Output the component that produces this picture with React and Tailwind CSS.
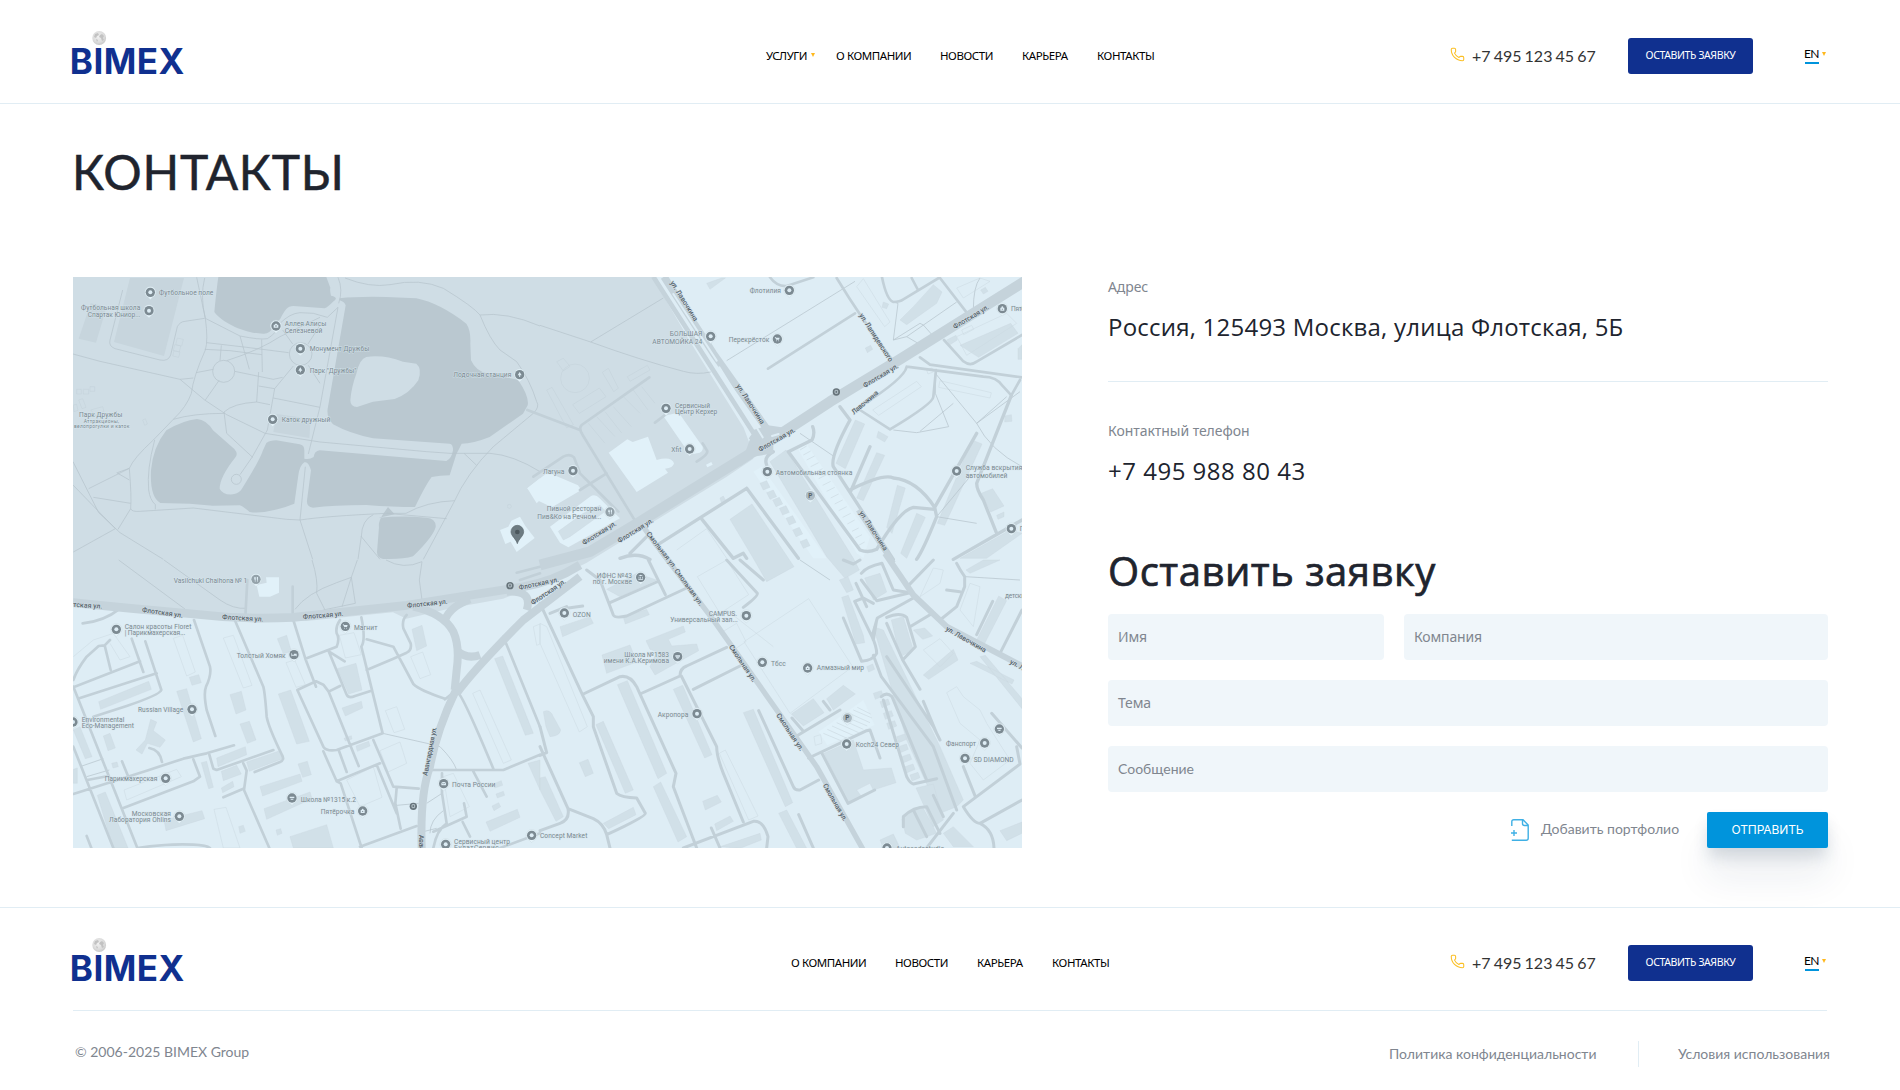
import React from "react";
import { Phone } from "lucide-react";

/* ---------- Map data. Each sheet (a, b, c, d) is one quarter of the map. ---------- */

const SHEET = {
  a: "translate(-39 -21)",
  b: "translate(1401 -21)",
  c: "translate(-39 849)",
  d: "translate(1401 849)",
};

const park =
  "M0 0H1738L1852 195L2012 452L2030 500L2041 545L1960 600L1540 858L1400 925L1290 965L1140 992L1000 1025L960 1006L700 1032L400 1018L180 995L0 975Z";

const water = [
  "M436 0C430 40 426 85 424 105C450 140 520 170 570 170Q590 172 600 150L622 125Q632 105 640 96Q650 84 672 88L755 94Q765 90 780 74Q800 62 774 56Q770 40 772 32L760 0Z",
  "M800 64Q850 58 940 60L1030 64Q1100 78 1180 140Q1194 160 1192 200L1194 250Q1210 285 1245 290L1335 308Q1370 360 1364 385L1350 410L1250 480Q1200 500 1166 500L1150 532L1130 595Q1100 596 1076 600Q1060 620 1026 690Q960 690 880 684Q780 684 720 692Q700 690 702 670L714 580Q706 552 694 556Q680 565 676 595L664 680Q640 690 600 700Q560 710 530 705Q510 688 500 685L420 686L350 680L262 678Q230 660 234 580Q240 510 280 460Q330 430 372 426Q400 428 420 460L484 516Q496 530 488 540Q440 600 440 635Q450 655 480 652Q500 650 510 630Q560 550 570 520L580 498Q590 490 610 490L680 502Q694 504 694 520L694 545Q710 548 722 540Q724 522 740 520L1120 552Q1136 545 1140 520Q1140 500 1130 500L900 484Q830 470 780 442Q760 420 764 395L818 85Q815 75 800 70Z",
  "M918 722Q990 715 1060 722Q1090 725 1088 750Q1080 780 1020 838Q990 848 930 846Q912 842 912 825L918 750Q915 735 930 712L945 690L965 712Z",
];
const island = "M880 240Q930 232 990 254L1030 260Q1048 275 1036 310Q1010 350 965 366L900 374L852 390Q832 390 832 370Q835 330 850 290Q860 245 880 240Z";

const parkBlocks = [
  ["a", "M210 24L372 24L312 258L162 216Z"],
  ["a", "M92 100L140 110L108 218L56 206Z"],
  ["a", "M650 432L752 446L748 504L640 486Z"],
];

const parkOutlines = [
  ["a", "M352 204l18 4-5 20-18-4zM344 224l18 4-4 18-18-4zM342 242l18 4-4 16-18-4zM56 390l12-4 10 26-12 4zM50 358h14v14h-14zM70 358h16v14h-16zM90 350h14v14h-14zM92 420l36-10 4 14-24 14zM40 405l10-2 4 18-12 4zM248 450l8-4 6 16-8 4z"],
  ["a", "M1342 709a6 6 0 1 0 12 0a6 6 0 1 0-12 0"],
  ["b", "M62 325a43 43 0 1 0 86 0a43 43 0 1 0-86 0M50 275l20-10 20 24-20 14zM98 404l80-50 20 26-80 50zM20 360l16-8 64 112-20 10zM205 295l30 60-14 10-34-58zM262 320l60-34 8 14-60 34zM145 460l50 60M170 440l55 60M195 425l50 64M220 410l54 60M250 380l50 50M280 360l44 60M305 350l40 50"],
];

const blocksPale = [
  ["a", "M1320 780L1345 770L1354 752L1380 740L1396 768L1424 804L1370 846L1352 815L1336 822Z"],
  ["a", "M1402 655L1440 625V690L1430 700Z"],
  ["b", "M206 548L262 508L278 516L324 500L350 570Q395 558 402 580Q400 594 375 596L384 608L290 666Z"],
  ["b", "M370 438L408 430Q422 432 430 448L488 530Q492 548 470 550Q448 556 440 540Z"],
  ["b", "M-38 655L20 610Q30 604 40 614L114 646L124 660L36 712L-10 690Z"],
  ["b", "M30 770L150 680Q165 670 178 684L240 745L85 832L60 818Z"],
  ["b", "M498 584l16-8 4 8-16 8z"],
  ["c", "M590 75L620 68L618 52H657V98L630 110H598Z"],
  ["d", "M836 515L970 420L1004 495L862 556Z"],
  ["b", "M770 530L795 515L990 800L970 865L950 850Z"],
  ["b", "M640 605L665 590L860 865H820Z"],
];

const blocks = [
  ["b", "M55 784L130 730L180 706L196 724L90 800L70 810Z"],
  ["b", "M570 748L636 702L715 820L762 890L680 935L640 865Z"],
  ["b", "M500 40L545 24H556L510 58ZM1080 150L1120 110L1180 44L1206 66L1190 100L1100 164ZM1260 226L1412 160L1434 190L1316 262Z"],
  ["b", "M888 580L946 450L974 462L916 596ZM950 684L1010 548L1034 556L970 692ZM1040 772L1072 646L1096 654L1056 790ZM1082 850L1130 730L1156 742L1100 865ZM1192 760L1296 510L1326 522L1214 766Z"],
  ["b", "M1324 670L1358 656L1392 708L1352 726ZM1015 484L1044 500L1034 516L1010 502ZM976 234l16-8 6 12-16 10zM1030 96l16 6-6 14-14-4zM1322 60l14-8 8 12-14 8zM1434 236l12-12v44h-12zM1220 210l28-14 4 14-22 14zM540 684l10-6 6 12-12 8zM1394 438l20-4 2 20-22 2zM1370 736l22-10v14l-18 8z"],
  ["b", "M690 575L738 540L940 865L958 900L915 925L860 860Z"],
  ["b", "M660 640l20-8 10 20-20 8zM680 668l20-8 10 20-20 8zM698 690l20-8 10 20-20 8zM718 715l20-8 10 20-20 8zM738 745l20-8 10 20-20 8zM758 780l20-8 10 20-20 8zM780 815l20-8 10 20-20 8zM1260 865L1410 780L1446 790L1340 865Z"],
  ["c", "M116 425L266 364L274 388L122 448ZM350 394L380 386L424 536L400 546ZM388 352l28-8 8 24-28 8zM510 404l34-10 14 56-30 12zM540 492l28-8 20 56-26 10zM256 540L272 478L290 486L280 512L316 540L300 562L262 550L246 582L228 570Z"],
  ["c", "M655 402L692 390L748 544L710 552ZM652 236l28-10 14 48-24 8zM832 326L888 310L906 390L866 402ZM846 444L904 424L908 444L856 468ZM888 558l38-14 4 14-38 16zM1056 208L1086 196L1100 258L1070 272ZM852 535l22-8 2 10-20 6z"],
  ["c", "M470 594L556 560L560 584L474 620ZM560 606L660 572L668 596L568 634ZM600 680L720 642L726 664L608 708ZM612 746L750 696L756 716L620 778ZM714 612l28-8 12 40-26 8zM484 634L530 616L544 642L490 662ZM484 684l34-20 4 16-34 18zM424 608l16-4 20 78-14 4zM130 528l20-8 16 44-22 8z"],
  ["c", "M690 830L800 794L820 864H700ZM312 780L426 752L434 776L318 812ZM112 706L136 696L204 864H160ZM40 510L60 500L96 590L76 596ZM1304 296L1328 288L1420 520L1396 526ZM1278 786L1372 748L1380 772L1290 814ZM1404 610L1440 600V690ZM40 628l12-4v46H40zM155 610l16-4 4 14-16 4zM1300 672l24-10 4 14-24 8zM1308 702l22-8 4 12-22 8zM536 800l14-4 6 18-16 6zM648 810l14-4 4 14-14 6zM1296 738l20-10 6 12-20 12z"],
  ["d", "M60 200L150 170L160 190L68 230ZM250 172L320 148L328 164L256 192ZM186 285L270 255L290 306L200 340ZM318 242L430 198L436 216L385 238L395 258L470 252L476 272L345 345L330 320L350 275L330 268ZM200 88L290 40L350 60L240 110Z"],
  ["d", "M232 374L262 362L380 640L354 656ZM168 494L190 484L280 690L256 700ZM400 388L428 376L516 584L494 594ZM610 458L640 448L758 728L736 740ZM340 680L362 666L440 830L414 846ZM118 608l26-10 16 42-24 10zM488 724l44-18 12 20-48 24zM190 790L280 742L288 764L206 806ZM524 792L570 768L580 784L530 812ZM540 860L660 820L664 840L600 865ZM716 760L740 750L800 865H770Z"],
  ["d", "M10 455Q30 445 40 470L62 510Q60 528 30 530L18 500ZM0 654L16 650L70 770L48 784L0 690Z"],
  ["d", "M754 462L820 416L852 458L790 498ZM860 416L910 376L946 402L880 450ZM852 580L940 540L970 630L1054 624L1068 668L1000 690L990 670L950 690L966 712L926 730Z"],
  ["d", "M1000 200L1030 210L1200 560L1270 720L1250 740L1200 760L1100 540ZM898 60l26-10 16 40-20 8zM905 112l20-6 45 120 4 22-26 4zM974 54L1020 40L1040 96L1000 120ZM1054 180L1090 170L1120 270L1080 290ZM1150 345L1240 268L1254 300L1166 358ZM1120 210l34-6 24 24-30 10z"],
  ["d", "M1310 240L1376 108L1400 122L1330 258ZM1290 310l20-6 112 56-6 12zM1320 290l16-4 110 130v30zM1278 30L1330 0H1380L1290 40ZM1086 778Q1110 740 1150 745L1190 820L1130 840L1096 820ZM1380 812L1446 786V820L1400 842ZM1210 820l30-20 60 60h-60zM1128 684L1180 672L1210 780L1180 800Z"],
  ["d", "M1000 400l24-8 6 16-24 10zM1020 425l24-8 6 16-24 10zM1030 460l24-8 6 16-24 10zM1040 490l24-8 6 16-24 10zM1070 530l24-8 6 16-24 10zM1075 560l24-8 6 16-24 10zM1085 590l24-8 6 16-24 10zM1095 620l24-8 6 16-24 10zM1110 645l24-8 6 16-24 10zM980 320l18-8 6 16-18 8zM1020 840L1060 822L1080 864H1030Z"],
];

const outlines = [
  ["b", "M998 420L1130 334L1144 350L1016 436ZM1200 332L1354 368L1350 384L1196 352ZM1320 24l30 10-80 50-20-30zM950 50l20-24 80 130-16 14zM1250 200L1400 130L1430 160L1280 256ZM410 840L500 776L560 865M1265 180l30-14 6 12-30 16zM1160 300l16-6 4 12-16 6z"],
  ["c", "M340 235L368 226L406 336L380 348ZM490 234L520 226L576 376L550 384ZM678 308l26-8 32 74-28 8zM838 226l44-8 22 66-48 10zM1052 290l36-14 24 68-32 12zM976 452l34-12 24 68-32 10zM960 572L1020 546L1040 610L984 636ZM192 690L350 628L364 650L200 720ZM462 748L498 742L540 864H490ZM1238 400L1260 390L1354 600L1330 610ZM860 660L940 620L966 712L900 740ZM1150 650L1180 640L1228 740L1170 770ZM40 290L100 240L160 220L210 290L180 300L150 250M1420 200l20-8v60l-10 4z"],
  ["d", "M0 190L20 200L142 500L118 516L0 250ZM538 580L556 570L654 768L626 780ZM472 50L560 0L626 104L540 160ZM612 245L806 116L938 320L750 460ZM540 220l50-30 28 55-30 20zM1220 398L1250 380L1270 410L1320 450L1340 490L1410 600L1330 660L1290 610L1320 540L1260 490ZM1150 270L1200 236L1240 280L1200 320ZM1140 110L1200 70L1210 30L1180 24ZM1260 150L1290 70L1320 80L1300 200ZM822 530l20-6 4 26-20 6zM530 165l30-15 140 110"],
];

const hatch = "M850 520l60 25M862 508l66 30M876 498l68 30M890 488l66 30M904 478l66 30M916 470l66 28M928 460l62 28M940 450l56 24M952 442l40 20";
const hatchB = "M780 540l20-12M790 555l22-12M800 570l24-12M812 590l24-12M824 608l24-12M836 626l24-12M848 646l24-12M860 664l24-12M872 684l24-12M884 702l24-12M896 722l24-12M908 742l24-12M922 762l22-12M936 784l20-10M946 804l20-10M956 826l18-10";

const paths = [
  ["a", "M39 252L120 274L360 328L400 324M434 24Q420 80 436 145Q445 210 436 240Q400 320 394 370Q380 410 340 448L280 510Q220 565 208 595L86 656M360 328L434 390L500 434L615 490L780 516L1100 545L1170 550H1290Q1360 555 1440 605M436 145L540 198Q600 210 622 206Q650 190 660 160Q690 130 720 128L760 130L802 142L834 112L780 410L745 552M410 22L436 145"],
  ["a", "M440 218L560 232L686 248M434 238L510 242L606 254M540 198L568 298M605 208L607 306M484 226L480 272M500 272Q600 240 660 200L780 142M524 304L640 328L668 322M408 308L460 298M436 390L478 330M596 306L590 396L630 404M596 348L644 356M640 384L780 412M700 288L644 356L622 480L576 562L540 614M590 396Q520 400 492 426L500 490L578 562M745 286L780 340M668 180L698 222M744 222L780 166"],
  ["a", "M458 304a33 33 0 1 0 66 0a33 33 0 1 0-66 0M688 252a34 34 0 1 0 68 0a34 34 0 1 0-68 0M514 628a15 15 0 1 0 30 0a15 15 0 1 0-30 0"],
  ["a", "M834 22Q850 60 836 100M855 24Q930 54 990 44Q1080 24 1150 55Q1240 110 1260 135Q1290 210 1320 240L1370 275Q1410 330 1430 395Q1440 410 1420 430L1300 530Q1220 610 1180 700L1090 868M1260 135Q1340 125 1440 168M340 448Q400 430 494 430M284 510Q260 600 266 660Q270 690 286 704V718M208 595Q215 680 212 716Q215 726 240 724L400 714L680 748L720 750Q800 738 980 730L1160 746M980 730H1038Q1100 695 1184 692M736 590L720 750L758 868M1212 550L1250 586M39 575L116 728L180 788L310 868M39 645L166 776L40 846M170 608L208 630M172 608L208 595M100 682L212 700M212 716L174 778M940 734Q905 750 904 800L960 868M904 798L894 868"],
  ["a", "M188 60L150 210Q145 228 165 236L300 270Q325 275 332 255L352 170Q360 155 375 154L434 145"],
  ["b", "M0 166L152 216Q300 270 430 304Q470 315 512 306M152 216L370 84M560 272L790 130L945 34"],
  ["b", "M1186 310L1186 370L1226 470L1130 488L1060 480M1186 310L1310 460L1440 365M1400 380L1310 460Q1350 540 1446 590M1140 484L1240 400M780 490L880 558M1060 96L1074 100L1060 210L1100 200L1160 235M1100 200L1250 96M1060 210L1140 160L1150 165L1190 210M1300 120Q1300 50 1320 24M1190 740L1310 760M1190 740L1290 620"],
  ["c", "M176 0L376 148V154M312 0L480 120Q520 148 560 145M756 0Q775 60 770 100L796 152M705 148Q740 100 830 68L874 52L886 130L790 150M874 52L846 140M892 0L874 52M978 0Q1030 30 1086 5L1078 60L1086 120M968 520L1110 552L1140 560Q1180 600 1190 630M1010 736L1076 730M1100 730L1146 700M1110 820Q1110 780 1150 752M1090 815L1130 805M60 620L130 596M80 650L148 630"],
  ["d", "M780 0L870 60M1440 60L1276 50"],
];

const roads = [
  ["b", 8, "M328 322L125 465Q115 475 128 495L290 760M120 480L-38 420M-20 620L70 560Q90 550 102 562L120 610L235 725M120 660L200 610M345 458L375 435M470 575Q510 550 500 540L488 520"],
  ["b", 8, "M684 296L945 130M890 24Q960 140 1064 280M1100 290L1330 320Q1370 320 1390 350L1414 376L1440 330M1100 290Q1095 325 960 410M1188 300L1180 380Q1180 400 1050 478L960 420M1140 262L1170 284L1446 322M1212 210L1270 274Q1290 290 1310 275L1446 195M1026 22Q1040 90 1060 96Q1080 95 1090 88L1196 24M1115 24L1134 60M1200 24L1282 130M690 22Q710 50 740 48L820 22"],
  ["b", 10, "M900 410L930 450Q870 560 880 590L1060 868M745 545L816 510Q826 490 818 470M745 545L960 840Q985 850 1010 838M990 530L932 664M1414 376L1310 640Q1310 660 1330 690L1370 790M930 660Q1030 610 1060 624Q1130 630 1184 712L1310 490M1184 712L1190 740Q1150 840 1130 868M1010 838Q1080 720 1120 712L1184 718M1446 750L1240 868M680 585Q670 560 700 545"],
  ["b", 10, "M620 655L350 826M620 655L775 865M486 748L580 865L610 850L620 865M240 865Q290 845 330 868M320 800L270 850"],
  ["c", 8, "M180 146Q130 185 68 190M40 360Q50 330 80 290L116 258L134 256L150 240M134 256L152 330M40 382L240 304M60 414L290 340M215 236L250 336M256 244L304 390Q300 404 200 438L100 470M40 380L232 864M40 560L160 864M82 660L145 648M40 702L260 632L370 596Q395 590 440 580L522 556M400 598L420 650L400 664L190 744M268 564Q300 570 306 606M186 604L204 648M80 828L94 864M232 864Q330 850 400 854Q440 856 450 864"],
  ["c", 8, "M402 180L450 320Q455 345 438 380Q430 400 440 450L466 528M526 184L610 380Q615 400 620 470Q625 500 666 585Q675 600 660 606L584 636M448 584L460 626L470 630L640 570M490 712L550 686M550 610L560 632L552 690L628 864M700 180L736 296L768 380M736 296L830 260Q840 235 830 220Q826 200 840 180M806 274L854 304M768 364L712 390L790 560Q800 575 830 570L968 520L904 260Q918 240 904 172M768 364L790 374L806 395L840 378M806 395L896 618M806 274L860 404Q866 416 885 408L934 392M920 238L1000 260L1060 372Q1080 392 1155 416M920 330L1000 296L1040 278Q1056 270 1052 250L1030 205Q1025 180 1040 165"],
  ["c", 8, "M556 170L562 60M698 160V80M790 574L830 664Q840 660 960 610M836 570L860 636M830 664L842 670L905 864M940 540L1000 680L1076 686M1010 684L1006 730L1022 806M900 860L1070 798M950 614L1010 760M1116 630H1330L1440 584M1195 400Q1210 410 1300 626M1330 230L1440 500M1146 640V700L1160 790M1160 790Q1130 810 1120 864M1120 815L1220 770L1212 730M1240 634L1280 710M1208 786L1230 830M1320 864L1440 820M1190 390L1155 418M1440 20L1370 38M1380 60L1440 40"],
  ["d", 9, "M0 130L130 410L160 470V500L230 700Q245 712 290 714L316 760Q318 770 200 824M130 402L240 350Q270 344 290 380L408 640L400 680L470 864M300 402L420 348Q420 325 440 318L560 262M424 348L530 560Q530 590 550 640L610 786M460 388L600 318M200 824Q190 790 160 776L84 746M84 746L0 560M84 746Q90 780 60 790L0 812M200 824L210 864M0 586L20 578L0 500M30 160L80 140M80 145L128 138M140 30L180 60L220 165Q225 176 260 168L440 84M210 128L350 66M325 0L376 104"],
  ["d", 9, "M430 864L640 784Q670 780 684 830L680 864M514 804L540 864M560 0L652 100Q655 108 610 142M600 0L670 60M656 452L760 680Q765 692 780 690L836 660M776 764L820 864M770 528L900 450M850 424L870 450M756 474L790 514M806 594L980 512L990 510L1020 594M846 580L924 730L1004 690M1270 620L1306 710M1355 460L1446 564M1270 740L1440 612L1430 560M1270 740Q1300 790 1320 790L1446 720M1320 790Q1360 810 1362 864M1240 760L1160 864"],
  ["d", 9, "M1120 114L1012 174L996 230Q1010 260 1010 280Q1000 300 965 304L910 174M996 230L944 124L970 114L1000 130M948 70L980 140M1010 180L1000 240M964 40Q980 20 1026 10L1060 90L1110 98L1010 122L964 60M1180 0L1108 74M1040 172Q1080 155 1100 172L1126 260L1088 300L1040 190M1110 200L1170 164M1088 300L1140 388M1000 286L1024 350L1180 560L1250 750M1040 290L1180 500L1200 540M1150 424L1190 520M1024 410Q1040 395 1056 410L1160 660M1030 420L1100 650Q1110 670 1120 672L1190 656M1090 800L1090 770Q1120 740 1160 740L1200 820M1120 750L1160 830M1180 706L1210 770M1380 280L1446 150M1310 224L1358 124M1250 10Q1260 30 1274 50V80L1250 140L1200 180M1220 90L1260 95M910 0L940 12L960 0"],
];

const mainRoads = [
  ["b", 32, "M1470 24L1080 268L870 395L640 545L300 755L150 845L0 885"],
  ["b", 14, "M340 20L660 520L630 500"],
  ["b", 22, "M372 20L520 250L690 490"],
  ["b", 16, "M310 770L345 820L400 890M955 720L1060 880"],
  ["c", 26, "M39 128Q200 145 400 162Q550 180 700 172L1040 136L1390 80Q1480 65 1560 15"],
  ["c", 24, "M1060 140Q1150 160 1180 215Q1200 260 1190 330L1184 390M1190 400Q1240 330 1390 180L1560 50M1155 180Q1170 140 1230 118M1190 270Q1220 300 1260 285M1340 95Q1420 90 1400 150"],
  ["c", 24, "M1188 390Q1130 510 1110 620Q1080 700 1085 864"],
  ["d", 16, "M360 -30L520 180L830 620L970 870"],
  ["d", 18, "M1035 -20L1120 105L1220 200L1446 318"],
];

const gaps = [
  ["b", 6, "M400 72L530 272M538 292L668 502"],
  ["b", 6, "M696 498l20-6"],
];

const streets = [
  ["b", 390, 38, 58, 138, "ул. Лавочкина"], ["b", 588, 348, 57, 138, "ул. Лавочкина"],
  ["b", 957, 136, 57, 168, "ул. Лапидевского"], ["b", 1244, 178, -31, 122, "Флотская ул."],
  ["b", 974, 354, -31, 120, "Флотская ул."], ["b", 942, 434, -40, 98, "Лавочкина"],
  ["b", 660, 546, -30, 124, "Флотская ул."], ["b", 957, 728, 57, 138, "ул. Лавочкина"],
  ["b", 238, 820, -32, 122, "Флотская ул."], ["b", 132, 826, -32, 116, "Флотская ул."],
  ["b", 318, 792, 52, 134, "Смольная ул."],
  ["c", 39, 140, 4, 88, "тская ул."], ["c", 245, 156, 8, 124, "Флотская ул."],
  ["c", 486, 178, 3, 124, "Флотская ул."], ["c", 729, 178, -5, 122, "Флотская ул."],
  ["c", 1042, 144, -6, 122, "Флотская ул."], ["c", 1378, 90, -12, 122, "Флотская ул."],
  ["c", 1418, 136, -34, 122, "Флотская ул."], ["c", 1102, 648, -79, 148, "Авангардная ул."],
  ["c", 1078, 824, 90, 148, "Авангардная ул."],
  ["d", 402, 32, 54, 132, "Смольная ул."], ["d", 566, 260, 56, 130, "Смольная ул."],
  ["d", 708, 466, 56, 130, "Смольная ул."], ["d", 848, 676, 60, 126, "Смольная ул."],
  ["d", 1216, 210, 30, 136, "ул. Лавочкина"], ["d", 1408, 310, 28, 136, "ул. Лавочкина"],
];

/* sheet, x, y (baseline), anchor, width, text */
const labels = [
  ["a", 297, 74, "start", 163, "Футбольное поле"], ["a", 241, 120, "end", 178, "Футбольная школа"],
  ["a", 241, 140, "end", 158, "Спартак Юниор..."], ["a", 674, 168, "start", 125, "Аллея Алисы"],
  ["a", 674, 188, "start", 113, "Селезневой"], ["a", 749, 243, "start", 179, "Монумент Дружбы"],
  ["a", 749, 309, "start", 140, "Парк \"Дружбы\""], ["a", 1354, 321, "end", 174, "Лодочная станция"],
  ["a", 665, 456, "start", 146, "Каток дружный"], ["a", 57, 441, "start", 130, "Парк Дружбы"],
  ["b", 723, 70, "end", 94, "Флотилия"], ["b", 487, 199, "end", 98, "БОЛЬШАЯ"],
  ["b", 487, 221, "end", 150, "АВТОМОЙКА 24"], ["b", 688, 216, "end", 122, "Перекрёсток"],
  ["b", 1413, 123, "start", 92, "Пятёрочка"], ["b", 405, 413, "start", 105, "Сервисный"],
  ["b", 405, 433, "start", 127, "Центр Керхер"], ["b", 424, 545, "end", 30, "Xfit"],
  ["b", 73, 611, "end", 64, "Лагуна"], ["b", 184, 724, "end", 164, "Пивной ресторан"],
  ["b", 184, 746, "end", 192, "Пив&Ко на Речном..."], ["b", 707, 614, "start", 230, "Автомобильная стоянка"],
  ["b", 1277, 600, "start", 170, "Служба вскрытия"], ["b", 1277, 623, "start", 125, "автомобилей"],
  ["b", 1439, 783, "start", 60, "Гараж"],
  ["c", 562, 68, "end", 221, "Vasilchuki Chaihona № 1"], ["c", 194, 206, "start", 200, "Салон красоты Floret"],
  ["c", 194, 225, "start", 182, "| Парикмахерская..."], ["c", 882, 209, "start", 70, "Магнит"],
  ["c", 677, 294, "end", 147, "Толстый Хомяк"], ["c", 370, 456, "end", 136, "Russian Village"],
  ["c", 65, 486, "start", 128, "Environmental"], ["c", 65, 504, "start", 157, "Eco-Management"],
  ["c", 292, 663, "end", 158, "Парикмахерская"], ["c", 722, 725, "start", 166, "Школа №1315 к.2"],
  ["c", 883, 761, "end", 101, "Пятёрочка"], ["c", 1176, 681, "start", 130, "Почта России"],
  ["c", 333, 768, "end", 118, "Московская"], ["c", 333, 787, "end", 186, "Лаборатория Ohlins"],
  ["c", 1182, 852, "start", 168, "Сервисный центр"], ["c", 1182, 871, "start", 134, "БулатСервис"],
  ["d", 276, 53, "end", 106, "ИФНС №43"], ["d", 276, 72, "end", 118, "по г. Москве"],
  ["d", 98, 171, "start", 54, "OZON"], ["d", 591, 167, "end", 85, "CAMPUS."],
  ["d", 593, 186, "end", 202, "Универсальный зал..."], ["d", 387, 290, "end", 134, "Школа №1583"],
  ["d", 387, 308, "end", 196, "имени К.А.Керимова"], ["d", 693, 319, "start", 44, "Тбсс"],
  ["d", 830, 331, "start", 142, "Алмазный мир"], ["d", 445, 470, "end", 92, "Акропора"],
  ["d", 947, 562, "start", 130, "Koch24 Север"], ["d", 1308, 559, "end", 90, "Фанспорт"],
  ["d", 1301, 605, "start", 120, "SD DIAMOND"], ["d", 0, 833, "start", 142, "Concept Market"],
  ["d", 1395, 115, "start", 60, "детски"], ["d", 1068, 873, "start", 145, "Autocadastudio"],
];

/* sheet, x, y, glyph */
const pins = [
  ["a", 271, 67, "dot"], ["a", 267, 122, "dot"], ["a", 648, 168, "camera"], ["a", 721, 236, "dot"],
  ["a", 721, 300, "tree"], ["a", 1379, 314, "tree"], ["a", 638, 448, "dot"],
  ["b", 748, 61, "dot"], ["b", 512, 199, "dot"], ["b", 712, 207, "cart"], ["b", 1387, 116, "bag"],
  ["b", 378, 415, "dot"], ["b", 449, 537, "dot"], ["b", 99, 602, "dot"], ["b", 210, 726, "food"],
  ["b", 682, 605, "dot"], ["b", 811, 677, "P"], ["b", 1250, 603, "dot"], ["b", 1414, 776, "dot"],
  ["c", 588, 58, "food"], ["c", 169, 208, "dot"], ["c", 856, 199, "cart"], ["c", 702, 284, "bed"],
  ["c", 396, 448, "dot"], ["c", 39, 486, "dot"], ["c", 317, 655, "dot"], ["c", 696, 714, "school"],
  ["c", 908, 753, "bag"], ["c", 1151, 671, "mail"], ["c", 358, 769, "dot"], ["c", 1157, 853, "dot"],
  ["c", 1415, 826, "dot"], ["d", 302, 52, "bank"], ["d", 73, 159, "dot"], ["d", 619, 167, "dot"],
  ["d", 413, 290, "school"], ["d", 667, 307, "dot"], ["d", 803, 324, "bag"], ["d", 471, 461, "dot"],
  ["d", 922, 474, "P"], ["d", 920, 552, "dot"], ["d", 1334, 549, "dot"], ["d", 1378, 507, "school"],
  ["d", 1275, 595, "dot"], ["d", 1041, 864, "dot"],
];

const stops = [["b", 889, 366], ["c", 1350, 77], ["c", 1060, 739]];

const glyphs = {
  dot: <circle r="6" fill="#deedf5" />,
  camera: <path d="M-7-4h3l2-3h4l2 3h3v9H-7zM-2.5 0a2.500 2.500 0 1 0 5 0a2.500 2.500 0 1 0-5 0" fill="#deedf5" fillRule="evenodd" />,
  tree: <path d="M0-8L6 2H1.500V7h-3V2H-6z" fill="#deedf5" />,
  cart: <path d="M-8-6h3l1 2H7L5 2h-8zM-3 4h2v3h-2zM3 4h2v3H3z" fill="#deedf5" />,
  bag: <path d="M-6-3h3a3 4 0 0 1 6 0h3v9H-6zM-1.500 0v3h3V0z" fill="#deedf5" fillRule="evenodd" />,
  food: <path d="M-6-7h1.500v5h1v-5H-2v5h1v-5H.5v6l-2 2v6h-2v-6l-2.500-2zM3-7h3V7H4V1H3z" fill="#deedf5" />,
  bed: <path d="M-8-4h2v4H0v-3h8v8H6V3H-6v2h-2z" fill="#deedf5" />,
  school: <path d="M-7-4H7v4H-7zM-5 2H5v2L0 6-5 4z" fill="#deedf5" />,
  mail: <path d="M-7-5H7L0 0zM-7-3l7 5 7-5v8H-7z" fill="#deedf5" />,
  bank: <path d="M0-8l7 4H-7zM-6-2h2v6h-2zM-1-2h2v6h-2zM4-2h2v6H4zM-7 5H7v2H-7z" fill="#deedf5" />,
};

function ContactMap() {
  const shapes = (items, props) =>
    items.map(([q, d], i) => <path key={i} transform={SHEET[q]} d={d} {...props} />);
  const lines = (items, props) =>
    items.map(([q, w, d], i) => (
      <path key={i} transform={SHEET[q]} d={d} strokeWidth={w} fill="none" strokeLinejoin="round" {...props} />
    ));
  return (
    <svg className="block h-[571px] w-[949px]" viewBox="0 0 2847 1713" preserveAspectRatio="none" role="img" aria-label="Карта">
      <rect width="2847" height="1713" fill="#deedf5" />
      <path d={park} fill="#cfdde5" />
      {shapes(parkBlocks, { fill: "#c7d5dd" })}
      {water.map((d, i) => <path key={i} d={d} fill="#bac8d0" />)}
      <path d={island} fill="#cfdde5" />
      {shapes(parkOutlines, { fill: "none", stroke: "#c3d1d9", strokeWidth: 1.5 })}
      {shapes(blocksPale, { fill: "#e1f1f9" })}
      {shapes(blocks, { fill: "#d1e0e8", stroke: "#c8d6de", strokeWidth: 1 })}
      {shapes(outlines, { fill: "none", stroke: "#cbd9e1", strokeWidth: 1.5 })}
      <path transform={SHEET.d} d={hatch} stroke="#cbd9e1" strokeWidth="2" fill="none" />
      <path transform={SHEET.b} d={hatchB} stroke="#cbd9e1" strokeWidth="2" fill="none" />
      {shapes(paths, { fill: "none", stroke: "#b6c4cc", strokeWidth: 2.2 })}
      {lines(roads, { stroke: "#c2d0d8", strokeLinecap: "round" })}
      <path transform={SHEET.b} d="M640 480L684 466L740 474L700 520L700 550L640 560L600 590Z" fill="#c5d3db" />
      {lines(mainRoads, { stroke: "#c5d3db" })}
      {lines(gaps, { stroke: "#deedf5", strokeLinecap: "round" })}
      <g fontFamily="Roboto, sans-serif" fontSize="21" fontWeight="500" fill="#57636a" stroke="#d0dee6" strokeWidth="3" paintOrder="stroke">
        {streets.map(([q, x, y, r, w, t], i) => (
          <g key={i} transform={SHEET[q]}>
            <text transform={`translate(${x} ${y}) rotate(${r})`} textLength={w}>{t}</text>
          </g>
        ))}
      </g>
      <g fontFamily="Roboto, sans-serif" fontSize="20" fill="#7b8990" stroke="#d9e8f0" strokeOpacity=".7" strokeWidth="3" paintOrder="stroke">
        {labels.map(([q, x, y, a, w, t], i) => (
          <g key={i} transform={SHEET[q]}>
            <text x={x} y={y} textAnchor={a} textLength={w}>{t}</text>
          </g>
        ))}
        <text x="85" y="438" textAnchor="middle" fontSize="15" textLength="106">Аттракционы,</text>
        <text x="86" y="452" textAnchor="middle" fontSize="15" textLength="166">велопрогулки и каток</text>
      </g>
      {pins.map(([q, x, y, k], i) => (
        <g key={i} transform={SHEET[q]}>
          <g transform={`translate(${x} ${y})`}>
            <path d="M0 22L-7 15A17 17 0 1 1 7 15Z" fill="#e3f1f8" stroke="#c2d0d8" strokeWidth="1" />
            {k === "P" ? (
              <>
                <circle r="14" fill="#aebcc4" />
                <text y="7" textAnchor="middle" fontFamily="Roboto, sans-serif" fontWeight="700" fontSize="19" fill="#57636a">P</text>
              </>
            ) : (
              <>
                <circle r="14" fill={k === "food" ? "#94a2aa" : "#7c8a92"} />
                {glyphs[k]}
              </>
            )}
          </g>
        </g>
      ))}
      {stops.map(([q, x, y], i) => (
        <g key={i} transform={SHEET[q]}>
          <circle cx={x} cy={y} r="11" fill="#66737a" />
          <rect x={x - 4} y={y - 5} width="8" height="9" rx="1" fill="none" stroke="#deedf5" strokeWidth="2" />
        </g>
      ))}
      <g transform="translate(1333 765)">
        <path d="M0 35C-4 20-19 12-19-1A19 19 0 1 1 19-1C19 12 4 20 0 35Z" fill="#6d7b82" stroke="#5c696f" strokeWidth="2" />
        <circle r="7" fill="#4b575d" />
      </g>
    </svg>
  );
}

/* ---------- Page pieces ---------- */

function Logo() {
  return (
    <svg className="-ml-1 block h-[50px] w-[120px] overflow-visible" viewBox="0 0 120 50" role="img" aria-label="BIMEX">
      <defs>
        <radialGradient id="globe" cx="45%" cy="40%" r="60%">
          <stop offset="0" stopColor="#f1f1f1" />
          <stop offset="0.7" stopColor="#dcdcdc" />
          <stop offset="1" stopColor="#c8c8c8" />
        </radialGradient>
      </defs>
      <circle cx="30.200" cy="8" r="6.900" fill="url(#globe)" />
      <path d="M26 4l3-1 1 2-2 1-1 2-2-1zM31 5l2-1 2 2-1 2 1 2-2 1-1-3-2-1zM27 9l2 1-1 2z" fill="#c2c2c2" />
      <text x="0.800" y="43.800" textLength="114.500" fontFamily="Inter, sans-serif" fontWeight="700" fontSize="35" fill="#10308f">
        BIMEX
      </text>
    </svg>
  );
}

function Caret({ className }) {
  return (
    <svg className={className} viewBox="0 0 4 4" fill="#ffb81c">
      <path d="M0 0h4L2 4z" />
    </svg>
  );
}

function NavLink({ children, className }) {
  return <a className={`block whitespace-nowrap ${className}`}>{children}</a>;
}

function TopBar({ withServices }) {
  return (
    <div className="flex h-[103px] items-center pl-[73px]">
      <div className="w-[112px] pt-[7px]">
        <Logo />
      </div>
      <nav
        className={`flex h-5 text-[11.5px] leading-5 tracking-[-0.43px] text-black font-['Noto_Sans',sans-serif] mt-[9px] ${
          withServices ? "ml-[581px] w-[652px]" : "ml-[606px] w-[627px]"
        }`}
      >
        {withServices && (
          <NavLink className="relative w-[70px]">
            УСЛУГИ
            <Caret className="absolute left-[45px] top-[7px] h-1 w-1" />
          </NavLink>
        )}
        <NavLink className="w-[104px]">О КОМПАНИИ</NavLink>
        <NavLink className="w-[82px]">НОВОСТИ</NavLink>
        <NavLink className="w-[75px]">КАРЬЕРА</NavLink>
        <NavLink className="tracking-[-0.38px]">КОНТАКТЫ</NavLink>
      </nav>
      <div className="mt-[9px] ml-[32px] flex items-center">
        <Phone className="mb-1 h-[15px] w-[15px] text-[#fbbf24]" strokeWidth={1.7} />
        <a className="ml-[7px] w-[156px] whitespace-nowrap text-[16px] leading-6 [word-spacing:-1px] text-[#333333] font-['Lato',sans-serif]">
          +7 495 123 45 67
        </a>
        <button className="flex h-9 w-[125px] items-center justify-center rounded-[3px] bg-[#10308f] pb-[2px] whitespace-nowrap text-[10.5px] leading-5 tracking-[-0.38px] text-white font-['Noto_Sans',sans-serif]">
          ОСТАВИТЬ ЗАЯВКУ
        </button>
        <div className="-mt-[2px] ml-[52px] flex items-start">
          <span className="block h-[18px] w-[14px] border-b-2 border-[#0094dc] text-[12px] leading-4 text-black font-['Lato',sans-serif]">
            <span className="-ml-px tracking-[-0.8px]">EN</span>
          </span>
          <Caret className="ml-[2.500px] mt-[6px] h-1 w-1" />
        </div>
      </div>
    </div>
  );
}

function Field({ label, className = "", textClass = "tracking-[-0.15px] font-['Noto_Sans',sans-serif]" }) {
  return (
    <div className={`flex h-[46px] items-center rounded bg-[#f0f6fa] px-[10px] text-[14px] leading-5 text-[#80868f] ${className} ${textClass}`}>
      {label}
    </div>
  );
}

export default function App() {
  return (
    <div className="h-[1090px] w-[1900px] overflow-hidden bg-white text-[#20242e]">
      <header className="h-[104px] border-b border-[#e1edf4]">
        <TopBar withServices />
      </header>

      <h1 className="mt-[38px] pl-[72px] text-[48px] leading-[60px] tracking-[0.75px] font-['Lato',sans-serif] [-webkit-text-stroke:0.5px_#20242e]">
        КОНТАКТЫ
      </h1>

      <main className="mt-[75px] flex h-[571px] gap-[86px] pl-[73px]">
        <div className="h-[571px] w-[949px] overflow-hidden">
          <ContactMap />
        </div>

        <section className="flex w-[720px] flex-col">
          <p className="text-[14px] leading-5 tracking-[-0.1px] text-[#80868f] font-['Noto_Sans',sans-serif]">Адрес</p>
          <p className="mt-[14px] text-[24px] leading-8 tracking-[0.22px] font-['Open_Sans',sans-serif]">
            Россия, 125493 Москва, улица Флотская, 5Б
          </p>
          <hr className="mt-[38px] border-t border-[#e1edf4]" />
          <p className="mt-[39px] text-[14px] leading-5 tracking-[-0.05px] text-[#80868f] font-['Noto_Sans',sans-serif]">
            Контактный телефон
          </p>
          <p className="mt-[14px] text-[24px] leading-8 tracking-[0.5px] font-['Open_Sans',sans-serif]">+7 495 988 80 43</p>

          <h2 className="mt-[59px] text-[40px] leading-[50px] tracking-[0.52px] font-['Open_Sans',sans-serif] [-webkit-text-stroke:0.7px_#20242e]">
            Оставить заявку
          </h2>
          <form className="mt-[18px] flex flex-col gap-5">
            <div className="flex gap-5">
              <Field label="Имя" className="w-[276px]" />
              <Field label="Компания" className="grow" />
            </div>
            <Field label="Тема" />
            <Field label="Сообщение" textClass="font-['Lato',sans-serif]" />
            <div className="flex h-9 items-center justify-end">
              <svg className="h-[22px] w-[18px]" viewBox="0 0 18 22" fill="none" stroke="#3fb0e5" strokeWidth="1.400">
                <path d="M.8 7V2.800Q.8.800 2.800.800H12L17.200 6V19.200Q17.200 21.200 15.200 21.200H.8M11.500.8V4.500Q11.500 6.500 13.500 6.500H17.200M3 11v6M0 14h6" />
              </svg>
              <span className="mb-[2px] ml-3 w-[166px] whitespace-nowrap text-[14px] leading-5 text-[#80868f] font-['Lato',sans-serif]">
                Добавить портфолио
              </span>
              <button
                type="button"
                className="h-9 w-[121px] rounded-[2px] bg-[#0094dc] text-[12px] leading-9 tracking-[-0.11px] text-white shadow-[0_10px_16px_-2px_rgba(30,55,85,0.18),0_30px_36px_0px_rgba(30,55,85,0.08)] font-['Inter',sans-serif]"
              >
                ОТПРАВИТЬ
              </button>
            </div>
          </form>
        </section>
      </main>

      <footer className="mt-[59px] border-t border-[#e1edf4]">
        <div className="-mt-px">
          <TopBar />
        </div>
        <div className="mx-[73px] flex h-[81px] border-t border-[#e1edf4] text-[14px] leading-5 text-[#80868f] font-['Lato',sans-serif]">
          <p className="mt-[31px] ml-[2px] w-[1314px] shrink-0">© 2006-2025 BIMEX Group</p>
          <div className="flex w-[442px] shrink-0">
            <a className="mt-[33px] w-[249px] shrink-0 whitespace-nowrap">Политика конфиденциальности</a>
            <span className="mt-[30px] h-[26px] w-px shrink-0 bg-[#e1edf4]" />
            <a className="mt-[33px] ml-[39px] whitespace-nowrap">Условия использования</a>
          </div>
        </div>
      </footer>
    </div>
  );
}
